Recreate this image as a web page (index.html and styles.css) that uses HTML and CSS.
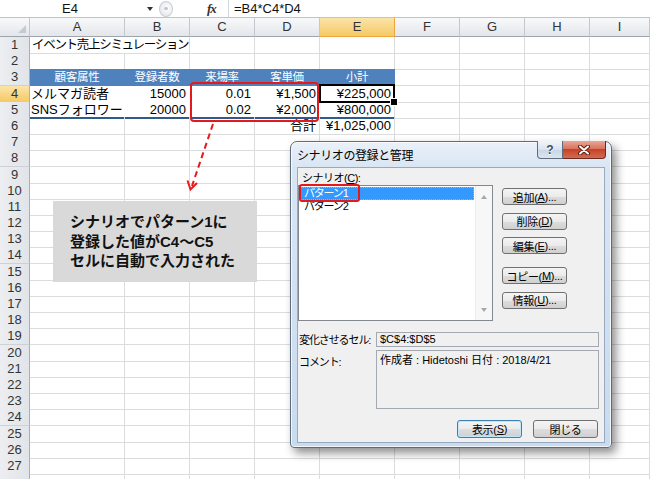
FILE: index.html
```html
<!DOCTYPE html>
<html lang="ja">
<head>
<meta charset="utf-8">
<title>シナリオの登録と管理</title>
<link rel="stylesheet" href="styles.css">
</head>
<body>
<div class="fbar">
  <div class="namebox">E4</div>
  <span class="ddarrow"></span>
  <span class="knob"><span class="knob-dot"></span></span>
  <span class="fx">fx</span>
  <span class="fsep"></span>
  <span class="formula">=B4*C4*D4</span>
</div>

<div class="sheet">
  <div class="row hdr">
    <span class="corner"><span class="corner-tri"></span></span><span>A</span><span>B</span><span>C</span><span>D</span><span class="on">E</span><span>F</span><span>G</span><span>H</span><span>I</span>
  </div>
  <div class="row"><span class="rh">1</span><span class="title">イベント売上シミュレーション</span><span></span><span></span><span></span><span></span><span></span><span></span><span></span></div>
  <div class="row"><span class="rh">2</span><span></span><span></span><span></span><span></span><span></span><span></span><span></span><span></span><span></span></div>
  <div class="row"><span class="rh">3</span><span class="th">顧客属性</span><span class="th">登録者数</span><span class="th">来場率</span><span class="th">客単価</span><span class="th">小計</span><span></span><span></span><span></span><span></span></div>
  <div class="row"><span class="rh on">4</span><span class="td">メルマガ読者</span><span class="td num">15000</span><span class="td num">0.01</span><span class="td num">¥1,500</span><span class="td num e sel">¥225,000</span><span></span><span></span><span></span><span></span></div>
  <div class="row"><span class="rh">5</span><span class="td last">SNSフォロワー</span><span class="td last num">20000</span><span class="td last num">0.02</span><span class="td last num">¥2,000</span><span class="td last num e">¥800,000</span><span></span><span></span><span></span><span></span></div>
  <div class="row"><span class="rh">6</span><span></span><span></span><span></span><span class="num">合計</span><span class="num">¥1,025,000</span><span></span><span></span><span></span><span></span></div>
  <div class="row"><span class="rh">7</span><span></span><span></span><span></span><span></span><span></span><span></span><span></span><span></span><span></span></div>
  <div class="row"><span class="rh">8</span><span></span><span></span><span></span><span></span><span></span><span></span><span></span><span></span><span></span></div>
  <div class="row"><span class="rh">9</span><span></span><span></span><span></span><span></span><span></span><span></span><span></span><span></span><span></span></div>
  <div class="row"><span class="rh">10</span><span></span><span></span><span></span><span></span><span></span><span></span><span></span><span></span><span></span></div>
  <div class="row"><span class="rh">11</span><span></span><span></span><span></span><span></span><span></span><span></span><span></span><span></span><span></span></div>
  <div class="row"><span class="rh">12</span><span></span><span></span><span></span><span></span><span></span><span></span><span></span><span></span><span></span></div>
  <div class="row"><span class="rh">13</span><span></span><span></span><span></span><span></span><span></span><span></span><span></span><span></span><span></span></div>
  <div class="row"><span class="rh">14</span><span></span><span></span><span></span><span></span><span></span><span></span><span></span><span></span><span></span></div>
  <div class="row"><span class="rh">15</span><span></span><span></span><span></span><span></span><span></span><span></span><span></span><span></span><span></span></div>
  <div class="row"><span class="rh">16</span><span></span><span></span><span></span><span></span><span></span><span></span><span></span><span></span><span></span></div>
  <div class="row"><span class="rh">17</span><span></span><span></span><span></span><span></span><span></span><span></span><span></span><span></span><span></span></div>
  <div class="row"><span class="rh">18</span><span></span><span></span><span></span><span></span><span></span><span></span><span></span><span></span><span></span></div>
  <div class="row"><span class="rh">19</span><span></span><span></span><span></span><span></span><span></span><span></span><span></span><span></span><span></span></div>
  <div class="row"><span class="rh">20</span><span></span><span></span><span></span><span></span><span></span><span></span><span></span><span></span><span></span></div>
  <div class="row"><span class="rh">21</span><span></span><span></span><span></span><span></span><span></span><span></span><span></span><span></span><span></span></div>
  <div class="row"><span class="rh">22</span><span></span><span></span><span></span><span></span><span></span><span></span><span></span><span></span><span></span></div>
  <div class="row"><span class="rh">23</span><span></span><span></span><span></span><span></span><span></span><span></span><span></span><span></span><span></span></div>
  <div class="row"><span class="rh">24</span><span></span><span></span><span></span><span></span><span></span><span></span><span></span><span></span><span></span></div>
  <div class="row"><span class="rh">25</span><span></span><span></span><span></span><span></span><span></span><span></span><span></span><span></span><span></span></div>
  <div class="row"><span class="rh">26</span><span></span><span></span><span></span><span></span><span></span><span></span><span></span><span></span><span></span></div>
  <div class="row"><span class="rh">27</span><span></span><span></span><span></span><span></span><span></span><span></span><span></span><span></span><span></span></div>
  <div class="row"><span class="rh"></span><span></span><span></span><span></span><span></span><span></span><span></span><span></span><span></span><span></span></div>
</div>

<div class="hl-range"></div>
<svg class="arrow" width="40" height="80" viewBox="180 118 40 80">
  <path d="M213 124 L192 186" stroke="#e8191c" stroke-width="2" stroke-dasharray="6 4" fill="none"/>
  <path d="M187.5 180.5 L190.5 189.5 L197 183" stroke="#e8191c" stroke-width="2" fill="none"/>
</svg>

<div class="callout">
  <p>シナリオでパターン1に</p>
  <p>登録した値がC4～C5</p>
  <p>セルに自動で入力された</p>
</div>

<div class="dialog">
  <div class="titlebar">
    <span class="dtitle">シナリオの登録と管理</span>
    <div class="caps">
      <span class="cap help">?</span>
      <span class="cap close">
        <svg width="12" height="10" viewBox="0 0 12 10">
          <path d="M2 1.5 L10 8.5 M10 1.5 L2 8.5" stroke="#5b1c12" stroke-width="4" stroke-linecap="round"/>
          <path d="M2 1.5 L10 8.5 M10 1.5 L2 8.5" stroke="#ffffff" stroke-width="2" stroke-linecap="round"/>
        </svg>
      </span>
    </div>
  </div>
  <div class="client">
    <div class="lbl">シナリオ(<u>C</u>):</div>
    <div class="main">
      <div class="listbox">
        <div class="items">
          <div class="item on">パターン1</div>
          <div class="item">パターン2</div>
        </div>
        <div class="vscroll"><span class="sup"></span><span class="sdown"></span></div>
        <div class="mark"></div>
      </div>
      <div class="btncol">
        <span class="btn">追加(<u>A</u>)...</span>
        <span class="btn">削除(<u>D</u>)</span>
        <span class="btn">編集(<u>E</u>)...</span>
        <span class="btn gapped">コピー(<u>M</u>)...</span>
        <span class="btn">情報(<u>U</u>)...</span>
      </div>
    </div>
    <div class="frow">
      <span class="flabel">変化させるセル:</span>
      <span class="field">$C$4:$D$5</span>
    </div>
    <div class="crow">
      <span class="flabel top">コメント:</span>
      <span class="field cbox">作成者 : Hidetoshi 日付 : 2018/4/21</span>
    </div>
    <div class="brow">
      <span class="btn big def">表示(<u>S</u>)</span>
      <span class="btn big">閉じる</span>
    </div>
  </div>
</div>
</body>
</html>
```
FILE: styles.css
```css
* { box-sizing: border-box; margin: 0; padding: 0; }
html, body { width: 650px; height: 479px; overflow: hidden; }
body {
  position: relative;
  background: #fff;
  font-family: "Liberation Sans", "Noto Sans CJK JP", sans-serif;
  font-size: 13px;
  color: #000;
}

/* formula bar */
.fbar {
  display: flex;
  align-items: center;
  height: 18px;
  border-bottom: 1px solid #bfc4ca;
  background: #fff;
}
.namebox {
  width: 140px;
  text-align: center;
  font-size: 13px;
  color: #111;
}
.ddarrow {
  width: 0; height: 0;
  margin-left: 7px;
  border-left: 3.5px solid transparent;
  border-right: 3.5px solid transparent;
  border-top: 4px solid #333;
}
.knob {
  width: 14px; height: 16px;
  margin-left: 6px;
  border: 1px solid #c9ced4;
  border-radius: 50%;
  background: radial-gradient(circle at 60% 45%, #ffffff 0, #eef0f3 50%, #d9dde2 100%);
  display: flex; align-items: center; justify-content: center;
}
.knob-dot { width: 4px; height: 3px; border-radius: 2px; background: #c2c7cd; }
.fx {
  margin-left: 34px;
  width: 20px;
  font-family: "Liberation Serif", serif;
  font-style: italic;
  font-weight: bold;
  font-size: 13px;
  color: #333;
  letter-spacing: -1px;
}
.fsep { width: 1px; height: 17px; background: #d3d7dc; margin-left: 1px; }
.formula {
  margin-left: 5px;
  font-size: 13px;
  color: #111;
}

/* sheet grid */
.row {
  display: grid;
  grid-template-columns: 30px 95px 65px 65px 65px 75px 65px 65px 65px 60px;
  height: 16.2px;
}
.row > span {
  border-right: 1px solid #dadcdd;
  border-bottom: 1px solid #dadcdd;
  line-height: 16px;
  font-size: 13px;
  white-space: nowrap;
  padding: 0 2px;
}
.row.hdr { height: 19px; }
.row.hdr > span {
  background: linear-gradient(#f8f9fa, #e3e6ea);
  border-right: 1px solid #c3c8ce;
  border-bottom: 1px solid #9da4ac;
  text-align: center;
  line-height: 18px;
  color: #333;
}
.row.hdr > .on {
  background: linear-gradient(#fbe4a8, #f5c965);
  border-right-color: #f0a43a;
  border-bottom-color: #f0a43a;
}
.row.hdr > .corner {
  display: flex;
  justify-content: flex-end;
  align-items: flex-end;
  padding: 0 3px 3px 0;
}
.corner-tri {
  width: 0; height: 0;
  border-left: 8px solid transparent;
  border-bottom: 8px solid #c5cad0;
}
.row > .rh {
  background: linear-gradient(90deg, #eceef1, #e1e4e8);
  border-right: 1px solid #a7aeb6;
  border-bottom: 1px solid #cdd1d6;
  text-align: center;
  padding: 0;
  color: #333;
}
.row > .rh.on {
  background: linear-gradient(#fbe4a8, #f5c965);
  border-right-color: #f0a43a;
  border-bottom-color: #f3c066;
}
.row > .title {
  grid-column: span 2;
  font-size: 12.5px;
  letter-spacing: -1.3px;
  padding-left: 2px;
}
.row > .th {
  background: #4f81bd;
  border-right-color: #4f81bd;
  border-bottom-color: #4f81bd;
  color: #fff;
  text-align: center;
  font-size: 11.5px;
  letter-spacing: -0.3px;
}
.row > .td {
  background: #fff;
  border-right-color: #fff;
  border-bottom-color: #e2e7ee;
  padding-left: 1px;
}
.row > .td.last { border-bottom: 2px solid #2f5a8e; line-height: 15px; }
.row > .td.e { border-right-color: #dadcdd; }
.row > .num { text-align: right; padding-right: 3px; }
.row > .sel { position: relative; }
.row > .sel::after {
  content: "";
  position: absolute;
  left: -1px; top: -2px; right: -1px; bottom: -1px;
  border: 2px solid #000;
}
.row > .sel::before {
  content: "";
  position: absolute;
  right: -4px; bottom: -4px;
  width: 6px; height: 6px;
  background: #000;
  border: 1px solid #fff;
  z-index: 1;
}

/* annotations */
.hl-range {
  position: absolute;
  left: 190px; top: 82px;
  width: 129px; height: 40px;
  border: 2px solid #e5191b;
  border-radius: 4px;
}
.arrow { position: absolute; left: 180px; top: 118px; }
.callout {
  position: absolute;
  left: 53px; top: 201px;
  width: 204px; height: 81px;
  background: #d9d9d9;
  padding: 11px 0 0 17px;
  font-size: 15px;
  font-weight: bold;
  line-height: 19.5px;
  color: #111;
}

/* dialog */
.dialog {
  position: absolute;
  left: 290px; top: 141px;
  width: 322px; height: 307px;
  border: 1px solid #5d6b7d;
  border-radius: 7px 7px 4px 4px;
  background: linear-gradient(180deg, #eaf1f9 0, #d9e5f3 26px, #c9dbef 100%);
  padding: 0 6px 4px;
  display: flex;
  flex-direction: column;
  box-shadow: 4px 5px 10px rgba(0, 0, 0, 0.45), inset 0 0 0 1px rgba(255, 255, 255, 0.75);
}
.titlebar { height: 25px; flex: none; display: flex; align-items: flex-start; }
.dtitle {
  padding-top: 7px;
  font-size: 12px;
  line-height: 15px;
  letter-spacing: -0.4px;
  color: #000;
}
.caps { margin-left: auto; margin-top: -1px; margin-right: -1px; display: flex; }
.cap {
  height: 18px;
  display: flex;
  align-items: center;
  justify-content: center;
  border: 1px solid #5f6d7f;
  border-top: none;
}
.help {
  width: 26px;
  border-radius: 0 0 0 4px;
  background: linear-gradient(#f1f5fa, #d9e3ee 50%, #c8d5e4 51%, #dbe5f0);
  color: #3d4c5f;
  font-size: 12px;
  font-weight: bold;
  text-shadow: 0 1px 0 #fff;
}
.close {
  width: 43px;
  border-left: none;
  border-color: #6e2a1f;
  border-radius: 0 0 4px 0;
  background: linear-gradient(#eaa697, #d9745e 45%, #c64329 50%, #d26b51);
}
.client {
  flex: 1;
  background: #f0f0f0;
  border: 1px solid #98aabf;
  display: flex;
  flex-direction: column;
  font-size: 11px;
  color: #000;
}
.lbl { margin-top: 4px; padding-left: 4px; height: 13px; line-height: 13px; letter-spacing: -0.5px; }
.main { display: flex; }
.listbox {
  position: relative;
  width: 195px; height: 136px;
  border: 1px solid #828790;
  background: #fff;
  display: flex;
}
.items { flex: 1; padding: 1px; }
.item { height: 12.7px; line-height: 12.7px; padding-left: 4px; letter-spacing: -1.2px; }
.item.on {
  background: #3399ff;
  color: #fff;
  outline: 1px dotted #e8a35a;
  outline-offset: -1px;
}
.vscroll {
  width: 17px;
  background: #f7f7f7;
  border-left: 1px solid #ececec;
  display: flex;
  flex-direction: column;
  justify-content: space-between;
  align-items: center;
  padding: 9px 0 8px;
}
.sup { width: 0; height: 0; border-left: 3.5px solid transparent; border-right: 3.5px solid transparent; border-bottom: 4px solid #a8a8a8; }
.sdown { width: 0; height: 0; border-left: 3.5px solid transparent; border-right: 3.5px solid transparent; border-top: 4px solid #a8a8a8; }
.mark {
  position: absolute;
  left: 0; top: -2px;
  width: 61px; height: 18px;
  border: 2px solid #e5191b;
  border-radius: 3px;
}
.btncol { display: flex; flex-direction: column; gap: 7.5px; margin-left: 9px; padding-top: 3px; }
.btn {
  width: 65px; height: 17px;
  border: 1px solid #707070;
  border-radius: 3px;
  background: linear-gradient(#f4f4f4, #ebebeb 50%, #dddddd 51%, #d0d0d0);
  display: flex;
  align-items: center;
  justify-content: center;
  font-size: 11px;
  letter-spacing: -0.3px;
  color: #000;
}
.btn.gapped { margin-top: 5.5px; }
.btn.big { height: 18px; }
.btn.def { border-color: #3c7fb1; box-shadow: inset 0 0 0 1px #bfe6fa; }
.frow { display: flex; align-items: center; margin-top: 10px; }
.crow { display: flex; align-items: flex-start; margin-top: 3px; }
.flabel { width: 78px; padding-left: 1px; letter-spacing: -1.1px; }
.flabel.top { padding-top: 3px; }
.field {
  width: 223px; height: 15px;
  border: 1px solid #a3a9b1;
  background: #f0f0f0;
  padding-left: 3px;
  line-height: 13px;
}
.cbox { height: 59px; padding: 3px 3px; }
.brow { display: flex; justify-content: flex-end; gap: 11px; margin-top: 11px; padding-right: 6px; }
```
